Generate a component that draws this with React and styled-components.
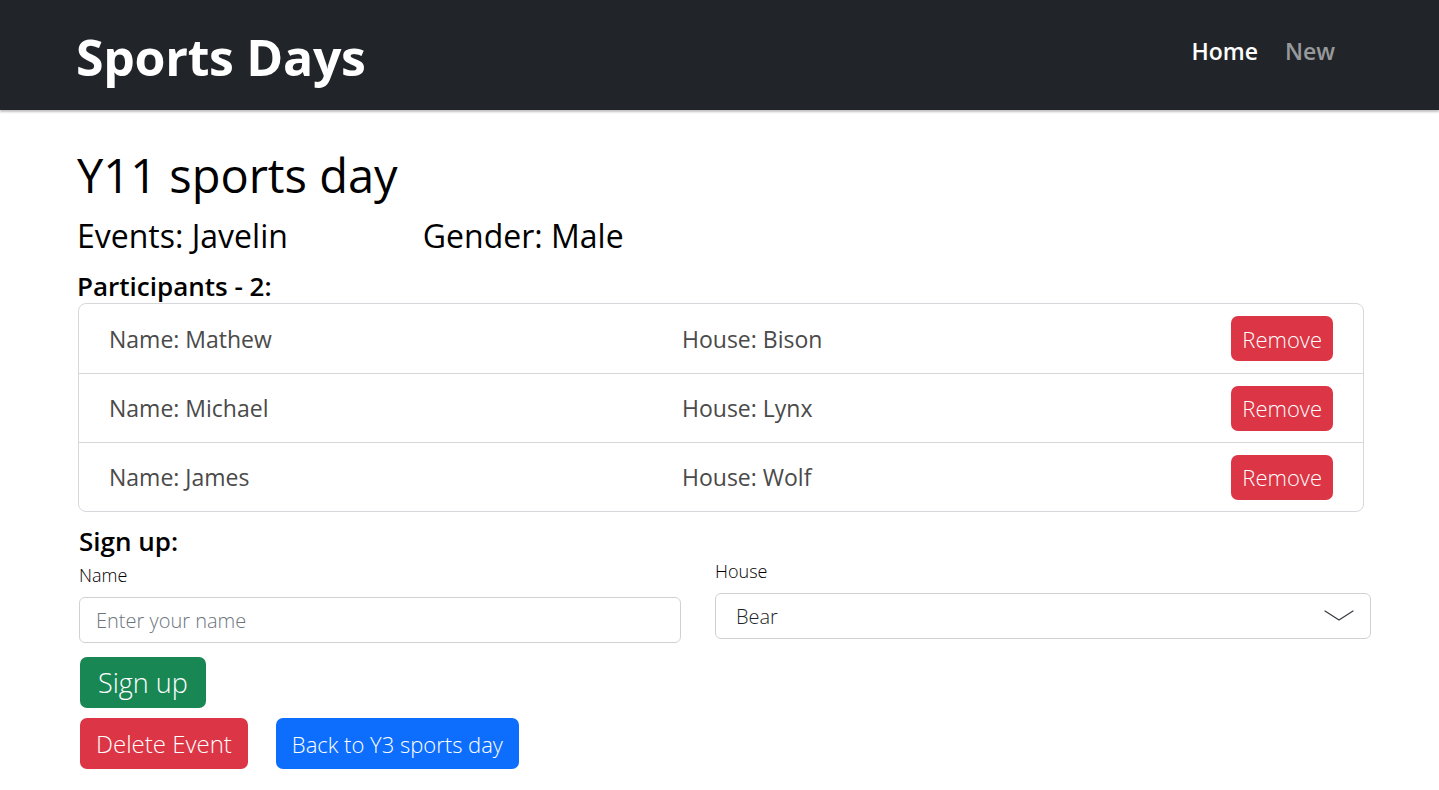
import React, { useState } from 'react';
import styled, { createGlobalStyle } from 'styled-components';

const GlobalStyle = createGlobalStyle`
    html, body {
        margin: 0;
        padding: 0;
        background: #fff;
        font-family: 'Open Sans', 'Noto Sans', sans-serif;
        color: #000;
    }
    * {
        box-sizing: border-box;
    }
`;

const NavBar = styled.header`
    height: 110px;
    background-color: #212529;
    display: flex;
    align-items: center;
    justify-content: space-between;
    padding: 0 104px 0 76px;
    box-shadow: 0 2px 2px rgba(0,0,0,0.25);
`;

const Brand = styled.div`
    color: #fff;
    font-size: 50px;
    font-weight: 700;
    letter-spacing: -0.3px;
    margin-top: 4px;
`;

const NavLinks = styled.nav`
    display: flex;
    gap: 27px;
    margin-top: -8px;
`;

const NavLink = styled.a`
    font-size: 23px;
    font-weight: 600;
    color: ${({ $active }) => ($active ? '#fff' : 'rgba(255,255,255,0.55)')};
    text-decoration: none;
    cursor: pointer;
`;

const Main = styled.main`
    padding: 35px 68px 20px 77px;
`;

const Title = styled.h1`
    margin: 0;
    font-size: 47px;
    font-weight: 500;
    line-height: 1.3;
`;

const InfoRow = styled.div`
    display: flex;
    gap: 135px;
    margin-top: 9px;
`;

const InfoText = styled.h3`
    margin: 0;
    font-size: 32px;
    font-weight: 500;
    line-height: 1.3;
`;

const SubHeading = styled.h4`
    margin: 13px 0 0;
    font-size: 26px;
    font-weight: 600;
    line-height: 1.3;
`;

const ParticipantList = styled.ul`
    list-style: none;
    margin: 0 7px 0 1px;
    padding: 0;
    border: 1px solid #d6d8db;
    border-radius: 8px;
`;

const ParticipantRow = styled.li`
    display: grid;
    grid-template-columns: 573px 1fr auto;
    align-items: center;
    height: 69px;
    padding: 0 30px;
    border-top: ${({ $first }) => ($first ? 'none' : '1px solid #d6d8db')};
`;

const RowText = styled.span`
    font-size: 23px;
    font-weight: 400;
    color: #4a4a4a;
`;

const Button = styled.button`
    border: none;
    border-radius: 7px;
    color: #fff;
    font-family: inherit;
    font-weight: 300;
    cursor: pointer;
    background-color: ${({ $variant }) =>
        $variant === 'success' ? '#198754' :
            $variant === 'primary' ? '#0d6efd' : '#dc3545'};
    font-size: ${({ $size }) => ($size === 'lg' ? '27px' : $size === 'md' ? '24px' : '22px')};
    padding: ${({ $size }) => ($size === 'sm' ? '0 11px' : $size === 'lg' ? '0 18px' : '0 16px')};
    height: ${({ $size }) => ($size === 'sm' ? '45px' : '51px')};
`;

const SignUpTitle = styled.h4`
    margin: 13px 0 0 2px;
    font-size: 26px;
    font-weight: 600;
    line-height: 1.3;
`;

const FormGrid = styled.div`
    display: grid;
    grid-template-columns: 602px 656px;
    column-gap: 34px;
    margin-left: 2px;
`;

const Field = styled.div`
    display: flex;
    flex-direction: column;
`;

const Label = styled.label`
    font-size: 18px;
    font-weight: 300;
    margin-bottom: 10px;
    margin-top: ${({ $offset }) => $offset || 0}px;
`;

const TextInput = styled.input`
    height: 46px;
    border: 1px solid #cfd2d5;
    border-radius: 6px;
    padding: 0 16px;
    font-family: inherit;
    font-size: 20px;
    font-weight: 300;
    &::placeholder {
        color: #6c757d;
    }
`;

const SelectBox = styled.div`
    height: 46px;
    border: 1px solid #cfd2d5;
    border-radius: 6px;
    display: flex;
    align-items: center;
    justify-content: space-between;
    padding: 0 15px 0 20px;
    font-size: 20px;
    font-weight: 300;
    color: #212529;
`;

const ButtonStack = styled.div`
    display: flex;
    flex-direction: column;
    align-items: flex-start;
    gap: 10px;
    margin: 14px 0 0 3px;
`;

const ButtonRow = styled.div`
    display: flex;
    gap: 28px;
`;

const participants = [
    { name: 'Mathew', house: 'Bison' },
    { name: 'Michael', house: 'Lynx' },
    { name: 'James', house: 'Wolf' },
];

const Chevron = () => (
    <svg width="32" height="16" viewBox="0 0 32 16" fill="none">
        <path d="M2 3 L16 12 L30 3" stroke="#343a40" strokeWidth="1.2" strokeLinecap="round" strokeLinejoin="round" />
    </svg>
);

const App = () => {
    const [name, setName] = useState('');

    return (
        <>
            <GlobalStyle />
            <NavBar>
                <Brand>Sports Days</Brand>
                <NavLinks>
                    <NavLink $active>Home</NavLink>
                    <NavLink>New</NavLink>
                </NavLinks>
            </NavBar>
            <Main>
                <Title>Y11 sports day</Title>
                <InfoRow>
                    <InfoText>Events: Javelin</InfoText>
                    <InfoText>Gender: Male</InfoText>
                </InfoRow>
                <SubHeading>Participants - 2:</SubHeading>
                <ParticipantList>
                    {participants.map((p, i) => (
                        <ParticipantRow key={p.name} $first={i === 0}>
                            <RowText>Name: {p.name}</RowText>
                            <RowText>House: {p.house}</RowText>
                            <Button $size="sm">Remove</Button>
                        </ParticipantRow>
                    ))}
                </ParticipantList>
                <SignUpTitle>Sign up:</SignUpTitle>
                <FormGrid>
                    <Field>
                        <Label $offset={4}>Name</Label>
                        <TextInput
                            placeholder="Enter your name"
                            value={name}
                            onChange={(e) => setName(e.target.value)}
                        />
                    </Field>
                    <Field>
                        <Label>House</Label>
                        <SelectBox>
                            <span>Bear</span>
                            <Chevron />
                        </SelectBox>
                    </Field>
                </FormGrid>
                <ButtonStack>
                    <Button $variant="success" $size="lg">Sign up</Button>
                    <ButtonRow>
                        <Button $size="md">Delete Event</Button>
                        <Button $variant="primary" $size="md" style={{ fontSize: 22 }}>Back to Y3 sports day</Button>
                    </ButtonRow>
                </ButtonStack>
            </Main>
        </>
    );
};

export default App;
